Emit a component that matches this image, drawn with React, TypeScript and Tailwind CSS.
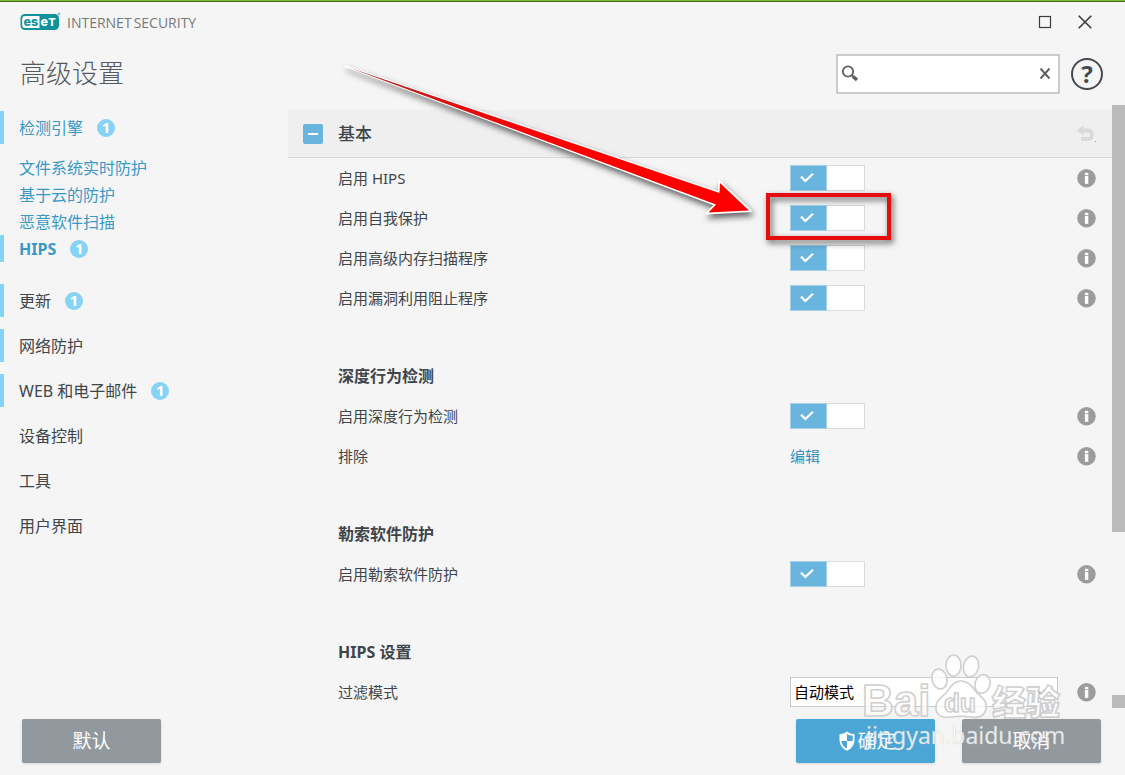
import { useState } from "react";

type NavItem = { name: string; badge?: number; changed?: boolean };

const subItems: NavItem[] = [
  { name: "文件系统实时防护" },
  { name: "基于云的防护" },
  { name: "恶意软件扫描" },
  { name: "HIPS", badge: 1, changed: true },
];

const mainItems: NavItem[] = [
  { name: "更新", badge: 1, changed: true },
  { name: "网络防护", changed: true },
  { name: "WEB 和电子邮件", badge: 1, changed: true },
  { name: "设备控制" },
  { name: "工具" },
  { name: "用户界面" },
];

const Badge = ({ count }: { count: number }) => (
  <span className="flex h-[18px] w-[18px] items-center justify-center rounded-full bg-[#86d3f5] text-[15px] leading-none font-bold text-white">
    {count}
  </span>
);

const InfoButton = ({ label }: { label: string }) => (
  <button type="button" aria-label={`${label} 信息`} className="shrink-0">
    <svg width="20" height="20" viewBox="0 0 20 20">
      <circle cx="9.5" cy="10.2" r="9.2" fill="#9c9c9c" />
      <rect x="7.9" y="4.8" width="3.4" height="2.4" fill="#fff" />
      <rect x="7.9" y="8" width="3.4" height="7.8" fill="#fff" />
    </svg>
  </button>
);

const Toggle = ({ id }: { id: string }) => {
  const [on, setOn] = useState(true);

  return (
    <span className="relative block h-[26px] w-[75px]">
      <input
        id={id}
        type="checkbox"
        checked={on}
        onChange={() => setOn(!on)}
        className="block h-full w-full appearance-none border border-[#d9dadb] bg-white"
      />
      {on && (
        <span className="pointer-events-none absolute top-0 left-0 flex h-[26px] w-[37px] items-center justify-center border border-[#a5cfe5] bg-[#69b5de]">
          <svg width="14" height="10" viewBox="0 0 14 10" className="mr-1">
            <path d="M1 3.6 L5.4 8 L13 0.8" fill="none" stroke="#fff" strokeWidth="2.2" />
          </svg>
        </span>
      )}
    </span>
  );
};

const Row = ({
  id,
  label,
  children,
}: {
  id: string;
  label: string;
  children: React.ReactNode;
}) => (
  <div className="grid h-10 grid-cols-[452fr_307fr] items-center pr-[15px] pl-[50px] text-[15px]">
    <label htmlFor={id}>{label}</label>
    <div className="flex items-center justify-between">
      {children}
      <InfoButton label={label} />
    </div>
  </div>
);

const SectionTitle = ({ children }: { children: React.ReactNode }) => (
  <h3 className="mt-[38px] flex h-10 items-center pl-[50px] text-base font-bold">{children}</h3>
);

// Red frame and arrow that point at the self-defense switch
const Callout = () => (
  <>
    <span className="pointer-events-none absolute -top-3 -left-6 z-10 h-[47px] w-[125px] border-4 border-[#e60c0c] drop-shadow-[2px_3px_3px_rgba(0,0,0,0.65)]" />
    <svg
      width="430"
      height="180"
      viewBox="340 60 430 180"
      className="pointer-events-none absolute -top-[145px] -left-[450px] z-10 drop-shadow-[2px_4px_3px_rgba(0,0,0,0.6)]"
    >
      <defs>
        <linearGradient id="arrowFill" x1="345" y1="66" x2="560" y2="140" gradientUnits="userSpaceOnUse">
          <stop offset="0" stopColor="#a03030" />
          <stop offset="0.5" stopColor="#dd0f0f" />
          <stop offset="1" stopColor="#ff0000" />
        </linearGradient>
      </defs>
      <path
        d="M345 66 L719 192 L719 181 L751 211 L706 213.5 L715 205 Z"
        fill="#fff"
        stroke="#fff"
        strokeWidth="1.8"
        strokeLinejoin="round"
      />
      <path d="M349 67.6 L719.5 193 L720 183 L749 210.4 L708.5 212.6 L716 204.6 Z" fill="url(#arrowFill)" />
    </svg>
  </>
);

const EsetLogo = () => (
  <svg width="41" height="20" viewBox="0 0 41 20" role="img" aria-label="ESET">
    <rect x="0.5" y="2" width="38.5" height="16" rx="4.5" fill="#11919a" />
    <path d="M5 4 H19.5 V16 H5 Q2.2 16 2.2 13 V7 Q2.2 4 5 4 Z" fill="#fff" />
    <g fontFamily="Inter, 'Liberation Sans', sans-serif" fontWeight="800" fontSize="12.5">
      <text x="3.4" y="14" fill="#11919a">es</text>
      <text x="20.6" y="14" fill="#fff">e</text>
      <text x="28.3" y="14" fill="#fff" fontSize="11">T</text>
    </g>
    <circle cx="39" cy="1.8" r="1" fill="none" stroke="#11919a" strokeWidth="0.6" />
  </svg>
);

const Watermark = () => (
  <svg
    width="210"
    height="110"
    viewBox="860 650 210 110"
    className="pointer-events-none absolute right-[55px] bottom-[15px] z-10"
  >
    <g fill="#fff" fillOpacity="0.75" stroke="#cfcfcf" strokeWidth="1.6">
      <text x="862" y="716" fontFamily="'Liberation Sans', sans-serif" fontWeight="700" fontSize="44">
        Bai
      </text>
      <ellipse cx="939.5" cy="679" rx="7.5" ry="10" transform="rotate(-14 939.5 679)" />
      <ellipse cx="953.5" cy="665.5" rx="7.5" ry="10.5" />
      <ellipse cx="971" cy="666.5" rx="7.5" ry="10.5" transform="rotate(12 971 666.5)" />
      <ellipse cx="982.5" cy="684" rx="7.5" ry="9.5" transform="rotate(16 982.5 684)" />
      <path d="M961 681 C969 681 973 688 977 693 C982 698 988 701 986 709 C984 718 977 718 971 717 C964 716 958 716 951 717 C944 718 937 717 936 709 C935 701 941 698 946 693 C950 688 953 681 961 681 Z" />
      <text x="944" y="712" fontFamily="'Liberation Sans', sans-serif" fontWeight="700" fontSize="26">
        du
      </text>
      <text x="992" y="715" fontFamily="'Noto Sans CJK SC', sans-serif" fontWeight="900" fontSize="34">
        经验
      </text>
    </g>
    <text x="866" y="744" fill="#fff" fillOpacity="0.85" stroke="#c4c8cb" strokeOpacity="0.6" strokeWidth="0.6" fontFamily="'Noto Sans', sans-serif" fontSize="23">
      jingyan.baidu.com
    </text>
  </svg>
);

const App = () => {
  const [query, setQuery] = useState("");

  return (
    <div className="flex min-h-screen flex-col bg-[#f5f5f5] font-['Noto_Sans','Noto_Sans_CJK_SC',sans-serif] text-[#3f4549]">
      <div className="h-0.5 border-b border-[#3f6b14] bg-[#7fba35]" />

      {/* Title bar */}
      <div className="flex h-10 items-center justify-between pr-[33px] pl-5">
        <div className="flex items-center gap-1.5">
          <EsetLogo />
          <span className="flex gap-0.5 font-['Open_Sans'] text-[14px] text-[#75797c]">
            <span>INTERNET</span>
            <span>SECURITY</span>
          </span>
        </div>
        <div className="flex items-center gap-[26px]">
          <button type="button" aria-label="最大化">
            <svg width="14" height="14" viewBox="0 0 14 14">
              <rect x="1.5" y="1.5" width="11" height="11" fill="none" stroke="#3c3c3c" strokeWidth="1.2" />
            </svg>
          </button>
          <button type="button" aria-label="关闭">
            <svg width="14" height="14" viewBox="0 0 14 14">
              <path d="M0.7 0.7 L13.3 13.3 M13.3 0.7 L0.7 13.3" stroke="#3c3c3c" strokeWidth="1.6" />
            </svg>
          </button>
        </div>
      </div>

      {/* Heading and search */}
      <header className="flex h-[63px] items-center justify-between pr-[22px] pl-5">
        <h1 className="text-[26px] font-light text-[#55595c]">高级设置</h1>
        <div className="flex items-center gap-[11px]">
          <div className="flex h-10 w-56 items-center border-2 border-[#cbcbcb] bg-white px-[3px]">
            <svg width="18" height="18" viewBox="0 0 18 18">
              <circle cx="7" cy="6.5" r="5.2" fill="none" stroke="#606060" strokeWidth="1.8" />
              <path d="M10.6 10 L12.4 11.7" stroke="#606060" strokeWidth="2" />
              <path d="M12 11.4 L16 15" stroke="#606060" strokeWidth="3.4" />
            </svg>
            <input
              type="text"
              aria-label="搜索"
              value={query}
              onChange={(e) => setQuery(e.target.value)}
              className="h-full min-w-0 flex-1 px-1 text-[15px] outline-none"
            />
            <button type="button" aria-label="清除" onClick={() => setQuery("")} className="px-1">
              <svg width="12" height="12" viewBox="0 0 12 12">
                <path d="M1.5 0.5 L10.5 10.5 M10.5 0.5 L1.5 10.5" stroke="#5c5c5c" strokeWidth="1.9" />
              </svg>
            </button>
          </div>
          <button
            type="button"
            aria-label="帮助"
            className="flex h-8 w-8 items-center justify-center rounded-full border-2 border-[#434a50] text-[24px] leading-none font-bold text-[#434a50]"
          >
            ?
          </button>
        </div>
      </header>

      <div className="flex flex-1">
        {/* Navigation */}
        <nav className="w-72 shrink-0 pt-1.5 text-base">
          <a href="#engine" className="flex h-[33px] items-center gap-3.5 border-l-4 border-[#86d3f5] pl-[15px] text-[#3a98c6]">
            检测引擎
            <Badge count={1} />
          </a>
          <ul className="mt-2.5 mb-[22px]">
            {subItems.map((item) => (
              <li key={item.name}>
                <a
                  href={`#${item.name}`}
                  className={`flex h-[27px] items-center gap-3.5 border-l-4 pl-[15px] text-[#3a98c6] ${
                    item.changed ? "border-[#86d3f5] font-bold" : "border-transparent"
                  }`}
                >
                  {item.name}
                  {item.badge && <Badge count={item.badge} />}
                </a>
              </li>
            ))}
          </ul>
          <ul className="flex flex-col gap-3">
            {mainItems.map((item) => (
              <li key={item.name}>
                <a
                  href={`#${item.name}`}
                  className={`flex h-[33px] items-center gap-3.5 border-l-4 pl-[15px] ${
                    item.changed ? "border-[#86d3f5]" : "border-transparent"
                  }`}
                >
                  {item.name}
                  {item.badge && <Badge count={item.badge} />}
                </a>
              </li>
            ))}
          </ul>
        </nav>

        {/* Settings */}
        <main className="min-w-0 flex-1 pt-[5px]">
          <div className="flex h-12 items-center justify-between border-b border-[#d9d9d9] bg-[#efefef] px-[15px]">
            <div className="flex items-center gap-[15px]">
              <button type="button" aria-label="折叠" className="flex h-5 w-5 items-center justify-center rounded-xs bg-[#69b5de]">
                <span className="h-0.5 w-2.5 bg-white" />
              </button>
              <h2 className="text-[17px] font-medium">基本</h2>
            </div>
            <button type="button" aria-label="还原">
              <svg width="20" height="18" viewBox="0 0 20 18">
                <path d="M5 5.5 H10.5 Q15 5.5 15 9.7 Q15 14 10.5 14 H4" fill="none" stroke="#dadada" strokeWidth="3.8" />
                <path d="M0 5.5 L6.5 0.5 V10.5 Z" fill="#dadada" />
                <rect x="18" y="16" width="1" height="1" fill="#999" />
              </svg>
            </button>
          </div>

          <Row id="hips" label="启用 HIPS">
            <Toggle id="hips" />
          </Row>
          <Row id="self-defense" label="启用自我保护">
            <div className="relative">
              <Toggle id="self-defense" />
              <Callout />
            </div>
          </Row>
          <Row id="memory-scanner" label="启用高级内存扫描程序">
            <Toggle id="memory-scanner" />
          </Row>
          <Row id="exploit-blocker" label="启用漏洞利用阻止程序">
            <Toggle id="exploit-blocker" />
          </Row>

          <SectionTitle>深度行为检测</SectionTitle>
          <Row id="behavior" label="启用深度行为检测">
            <Toggle id="behavior" />
          </Row>
          <Row id="exclusions" label="排除">
            <a id="exclusions" href="#exclusions" className="text-[#2f8fbe]">
              编辑
            </a>
          </Row>

          <SectionTitle>勒索软件防护</SectionTitle>
          <Row id="ransomware" label="启用勒索软件防护">
            <Toggle id="ransomware" />
          </Row>

          <SectionTitle>HIPS 设置</SectionTitle>
          <Row id="filter-mode" label="过滤模式">
            <div className="relative w-[268px]">
              <select
                id="filter-mode"
                className="block h-[30px] w-full appearance-none border border-[#c8cacc] bg-white pl-[3px] text-[15px] text-black"
              >
                <option>自动模式</option>
                <option>交互模式</option>
                <option>学习模式</option>
              </select>
              <svg width="10" height="6" viewBox="0 0 10 6" className="pointer-events-none absolute top-3 right-3">
                <path d="M1 1 L5 5 L9 1" fill="none" stroke="#555" strokeWidth="1.3" />
              </svg>
            </div>
          </Row>
        </main>

        {/* Scroll bar */}
        <div className="flex w-[13px] shrink-0 flex-col justify-between pb-1">
          <div className="h-[427px] bg-[#bababa]" />
          <div className="h-[13px] bg-[#bababa]" />
        </div>
      </div>

      {/* Footer */}
      <footer className="relative flex justify-between pt-[7px] pr-6 pb-3 pl-[22px] text-[19px] text-white">
        <button type="button" className="h-11 w-[139px] rounded-xs bg-[#92999e] shadow-sm">
          默认
        </button>
        <div className="flex gap-[27px]">
          <button type="button" className="flex h-11 w-[139px] items-center justify-center gap-0.5 rounded-xs bg-[#4ba6d5] pl-1 shadow-sm">
            <svg width="16" height="20" viewBox="0 0 16 20">
              <path d="M8 0.5 Q11 3 15.5 3.2 V9 Q15.5 16.5 8 19.8 Q0.5 16.5 0.5 9 V3.2 Q5 3 8 0.5 Z" fill="#fff" />
              <path d="M8 3 V10 H13.7 V4.8 Q10.4 4.6 8 3 Z" fill="#4ba6d5" />
              <path d="M2.3 10 H8 V17.6 Q2.8 15 2.3 10 Z" fill="#4ba6d5" />
            </svg>
            确定
          </button>
          <button type="button" className="h-11 w-[139px] rounded-xs bg-[#92999e] shadow-sm">
            取消
          </button>
        </div>
        <Watermark />
      </footer>
    </div>
  );
};

export default App;
